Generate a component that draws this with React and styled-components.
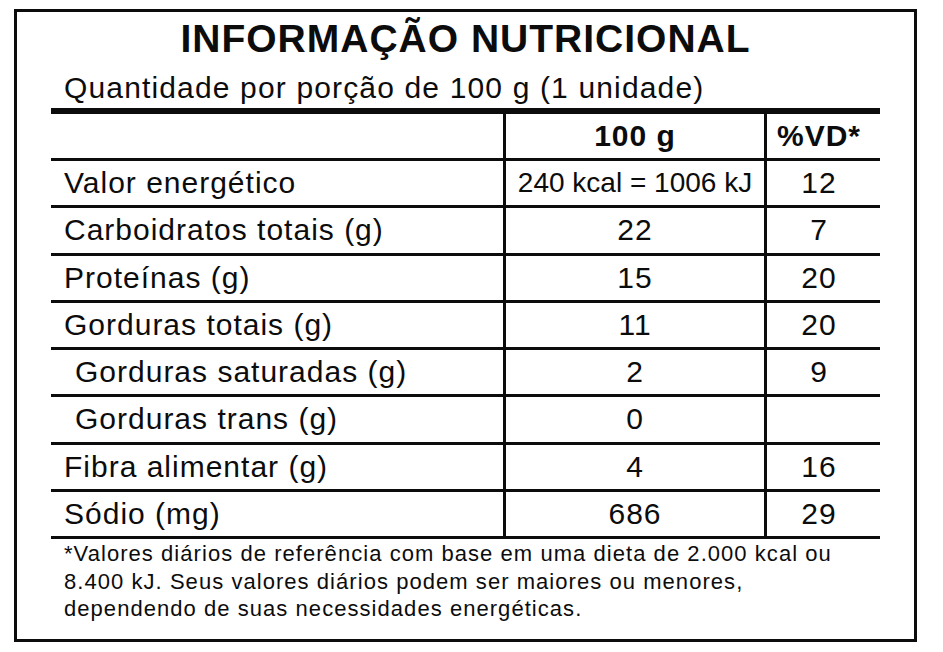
import React from 'react'
import styled, {createGlobalStyle} from 'styled-components'

const ink = '#0c0c0c'

const GlobalStyle = createGlobalStyle`
  html, body {
    margin: 0;
    padding: 0;
    background: #ffffff;
  }
  body {
    font-family: "Liberation Sans", Arial, sans-serif;
    color: ${ink};
  }
`

const Frame = styled.section`
  box-sizing: border-box;
  width: 903px;
  height: 633px;
  margin: 9px 0 0 14px;
  padding: 8px 34px 0 34px;
  border: 3px solid ${ink};
  display: flex;
  flex-direction: column;
`

const Title = styled.h1`
  margin: 0;
  font-size: 39px;
  line-height: 38px;
  font-weight: 700;
  letter-spacing: 1px;
  text-align: center;
`

const Portion = styled.p`
  margin: 15px 0 0 13px;
  font-size: 30px;
  line-height: 30px;
  letter-spacing: 1.15px;
`

const Table = styled.div`
  margin-top: 5px;
  display: flex;
  flex-direction: column;
`

const Row = styled.div`
  box-sizing: border-box;
  display: grid;
  grid-template-columns: 452px 261px 116px;
  height: ${p => (p.$head ? '53px' : '47.25px')};
  border-top: ${p => (p.$head ? `6px solid ${ink}` : 'none')};
  border-bottom: 3px solid ${ink};
`

const Label = styled.div`
  display: flex;
  align-items: center;
  padding-left: ${p => (p.$indent ? '24px' : '13px')};
  font-size: 30px;
  letter-spacing: 1px;
  white-space: nowrap;
`

const Value = styled.div`
  display: flex;
  align-items: center;
  justify-content: center;
  border-left: 3px solid ${ink};
  padding-right: ${p => (p.$narrow ? '9px' : '0')};
  font-size: ${p => (p.$small ? '28px' : '30px')};
  font-weight: ${p => (p.$bold ? 700 : 400)};
  letter-spacing: ${p => (p.$small ? '0' : '1px')};
  white-space: nowrap;
`

const Note = styled.p`
  margin: 1px 0 0 13px;
  font-size: 22px;
  line-height: 27.5px;
  letter-spacing: 1.05px;
`

const rows = [
  {label: 'Valor energético', value: '240 kcal = 1006 kJ', vd: '12', small: true},
  {label: 'Carboidratos totais (g)', value: '22', vd: '7'},
  {label: 'Proteínas (g)', value: '15', vd: '20'},
  {label: 'Gorduras totais (g)', value: '11', vd: '20'},
  {label: 'Gorduras saturadas (g)', value: '2', vd: '9', indent: true},
  {label: 'Gorduras trans (g)', value: '0', vd: '', indent: true},
  {label: 'Fibra alimentar (g)', value: '4', vd: '16'},
  {label: 'Sódio (mg)', value: '686', vd: '29'},
]

const App = () => (
  <>
    <GlobalStyle />
    <Frame>
      <Title>INFORMAÇÃO NUTRICIONAL</Title>
      <Portion>Quantidade por porção de 100 g (1 unidade)</Portion>
      <Table>
        <Row $head>
          <Label />
          <Value $bold>100 g</Value>
          <Value $bold $narrow>%VD*</Value>
        </Row>
        {rows.map(row => (
          <Row key={row.label}>
            <Label $indent={row.indent}>{row.label}</Label>
            <Value $small={row.small}>{row.value}</Value>
            <Value $narrow>{row.vd}</Value>
          </Row>
        ))}
      </Table>
      <Note>
        *Valores diários de referência com base em uma dieta de 2.000 kcal ou
        <br />
        8.400 kJ. Seus valores diários podem ser maiores ou menores,
        <br />
        dependendo de suas necessidades energéticas.
      </Note>
    </Frame>
  </>
)

export default App
